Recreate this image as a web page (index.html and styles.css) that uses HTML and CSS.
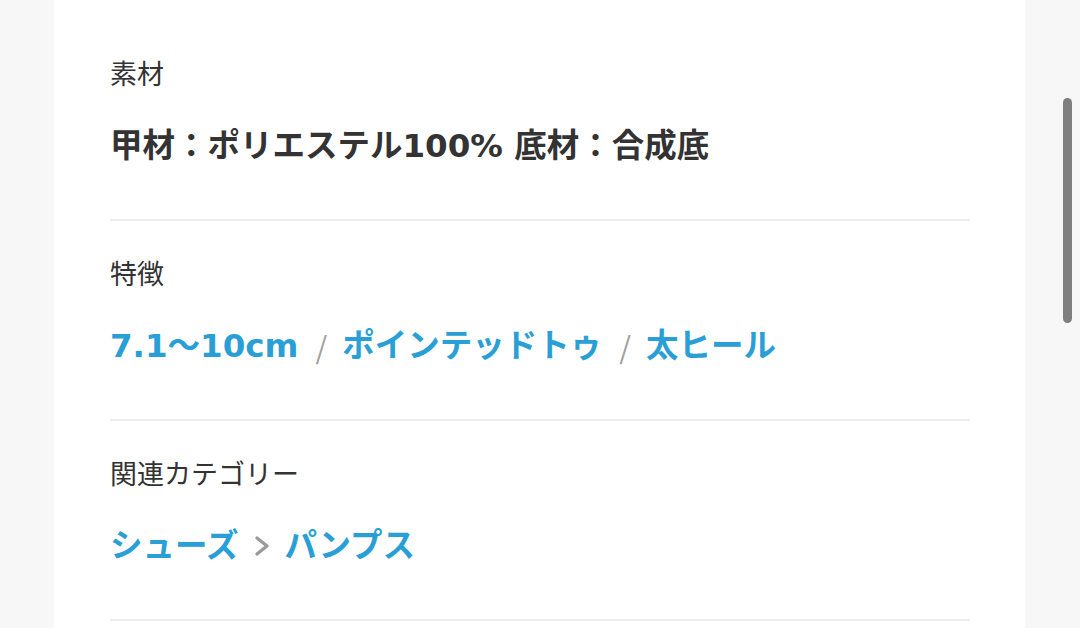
FILE: index.html
```html
<!DOCTYPE html>
<html lang="ja">
<head>
    <meta charset="utf-8">
    <title>商品詳細</title>
    <link rel="stylesheet" href="styles.css">
</head>
<body>
    <div class="page">
        <div class="card">
            <div class="spec">
                <div class="spec-label">素材</div>
                <div class="spec-value">甲材：ポリエステル100% 底材：合成底</div>
            </div>
            <div class="spec">
                <div class="spec-label">特徴</div>
                <div class="spec-value links">
                    <a href="#">7.1〜10cm</a><span class="slash">/</span><a href="#">ポインテッドトゥ</a><span class="slash">/</span><a href="#">太ヒール</a>
                </div>
            </div>
            <div class="spec">
                <div class="spec-label">関連カテゴリー</div>
                <div class="spec-value links">
                    <a href="#">シューズ</a>
                    <svg class="chevron" width="16" height="24" viewBox="0 0 16 24"><path d="M3 4 L13 12 L3 20" fill="none" stroke="#9a9a9a" stroke-width="3.4" stroke-linecap="round" stroke-linejoin="round"/></svg>
                    <a href="#">パンプス</a>
                </div>
            </div>
        </div>
    </div>
    <div class="scrollbar"></div>
</body>
</html>
```

FILE: styles.css
```css
* {
    padding: 0;
    margin: 0;
    box-sizing: border-box
}

body {
    background-color: #f7f7f7;
    font-family: "Noto Sans CJK JP", sans-serif;
    color: #333;
    overflow: hidden
}

.page {
    height: 628px
}

.card {
    width: 971px;
    height: 100%;
    margin-left: 54px;
    background-color: #fff;
    padding: 21px 55px 0 56px
}

.spec {
    padding: 37px 0 53px;
    border-bottom: 2px solid #eeeeee
}

.spec-label {
    font-size: 27px;
    line-height: 30px;
    color: #333
}

.spec-value {
    margin-top: 38px;
    font-family: "DejaVu Sans", "Noto Sans CJK JP", sans-serif;
    font-size: 32.5px;
    line-height: 40px;
    font-weight: 700;
    color: #333;
    white-space: nowrap
}

.links {
    display: flex;
    align-items: center
}

.links a {
    color: #2a9fd6;
    text-decoration: none
}

.slash {
    font-family: "Noto Sans CJK JP", sans-serif;
    color: #a0a0a0;
    font-weight: 400;
    font-size: 30px;
    margin: 0 15px 0 17px
}

.chevron {
    margin: 0 14px 0 16px
}

.scrollbar {
    position: fixed;
    top: 98px;
    left: 1063px;
    width: 9px;
    height: 225px;
    border-radius: 5px;
    background-color: #7f7f7f
}
```
